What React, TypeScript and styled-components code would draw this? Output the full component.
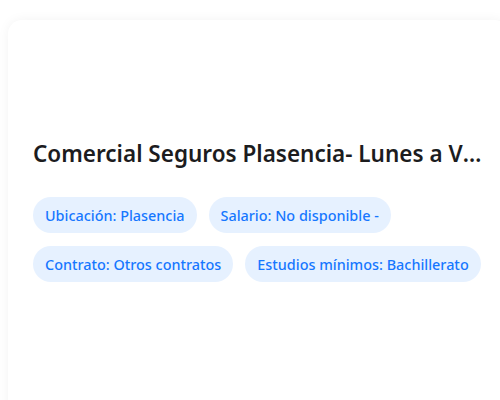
import React from 'react';
import styled, {createGlobalStyle} from 'styled-components';

const GlobalStyle = createGlobalStyle`
  html, body {
    margin: 0;
    padding: 0;
    background: #ffffff;
    overflow: hidden;
  }
  body {
    font-family: "Noto Sans", "Open Sans", sans-serif;
  }
`;

const Page = styled.div`
  padding: 20px 0 0 8px;
  width: 520px;
`;

const Card = styled.div`
  width: 500px;
  height: 400px;
  box-sizing: border-box;
  padding: 119px 25px 24px 25px;
  background: #ffffff;
  border-radius: 14px;
  box-shadow: 0 0 12px rgba(0, 0, 0, 0.05);
  display: flex;
  flex-direction: column;
  gap: 28px;
`;

const Title = styled.h2`
  margin: 0;
  font-size: 22.5px;
  font-weight: 600;
  line-height: 30px;
  color: #1c1c1e;
  white-space: nowrap;
  overflow: hidden;
  text-overflow: ellipsis;
`;

const Tags = styled.div`
  display: flex;
  flex-wrap: wrap;
  gap: 13px 12px;
`;

const Tag = styled.span`
  display: inline-flex;
  align-items: center;
  height: 36px;
  padding: 0 12px;
  border-radius: 18px;
  background: #e6f1ff;
  color: #1677ff;
  font-size: 14.4px;
  font-weight: 500;
  white-space: nowrap;
`;

const tags = [
    'Ubicación: Plasencia',
    'Salario: No disponible -',
    'Contrato: Otros contratos',
    'Estudios mínimos: Bachillerato',
];

const App = () => {
    return (
        <Page>
            <GlobalStyle/>
            <Card>
                <Title>Comercial Seguros Plasencia- Lunes a Viernes de mañana</Title>
                <Tags>
                    {tags.map(t => <Tag key={t}>{t}</Tag>)}
                </Tags>
            </Card>
        </Page>
    );
}

export default App;
